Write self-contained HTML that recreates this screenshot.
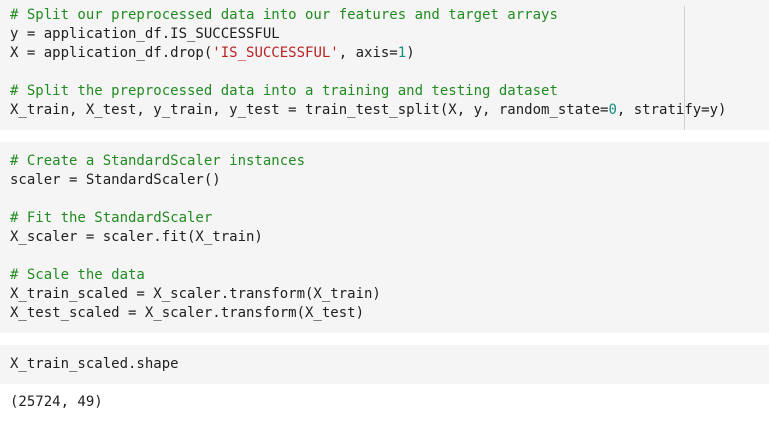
<!DOCTYPE html>
<html><head><style>
body{margin:0;width:769px;height:424px;background:#fff;overflow:hidden;position:relative;font-family:"DejaVu Sans Mono","Liberation Mono",monospace;font-size:14px;color:#212121}
.c{position:absolute;left:0;width:769px;background:#f5f5f5}
pre{margin:0;position:absolute;left:10px;font:inherit;line-height:19px;white-space:pre}
.g{color:#228b22}.s{color:#ba2121}.n{color:#138b7a}
</style></head><body>
<div class="c" style="top:0;height:130px"><div style="position:absolute;left:684px;top:6px;width:1px;height:124px;background:#d0d0d0"></div></div>
<pre style="top:6px"><span class="g"># Split our preprocessed data into our features and target arrays</span>
y = application_df.IS_SUCCESSFUL
X = application_df.drop(<span class="s">'IS_SUCCESSFUL'</span>, axis=<span class="n">1</span>)

<span class="g"># Split the preprocessed data into a training and testing dataset</span>
X_train, X_test, y_train, y_test = train_test_split(X, y, random_state=<span class="n">0</span>, stratify=y)</pre>
<div class="c" style="top:142px;height:191px"></div>
<pre style="top:152px"><span class="g"># Create a StandardScaler instances</span>
scaler = StandardScaler()

<span class="g"># Fit the StandardScaler</span>
X_scaler = scaler.fit(X_train)

<span class="g"># Scale the data</span>
X_train_scaled = X_scaler.transform(X_train)
X_test_scaled = X_scaler.transform(X_test)</pre>
<div class="c" style="top:345px;height:39px"></div>
<pre style="top:355px">X_train_scaled.shape</pre>
<pre style="top:393px">(25724, 49)</pre>
</body></html>
